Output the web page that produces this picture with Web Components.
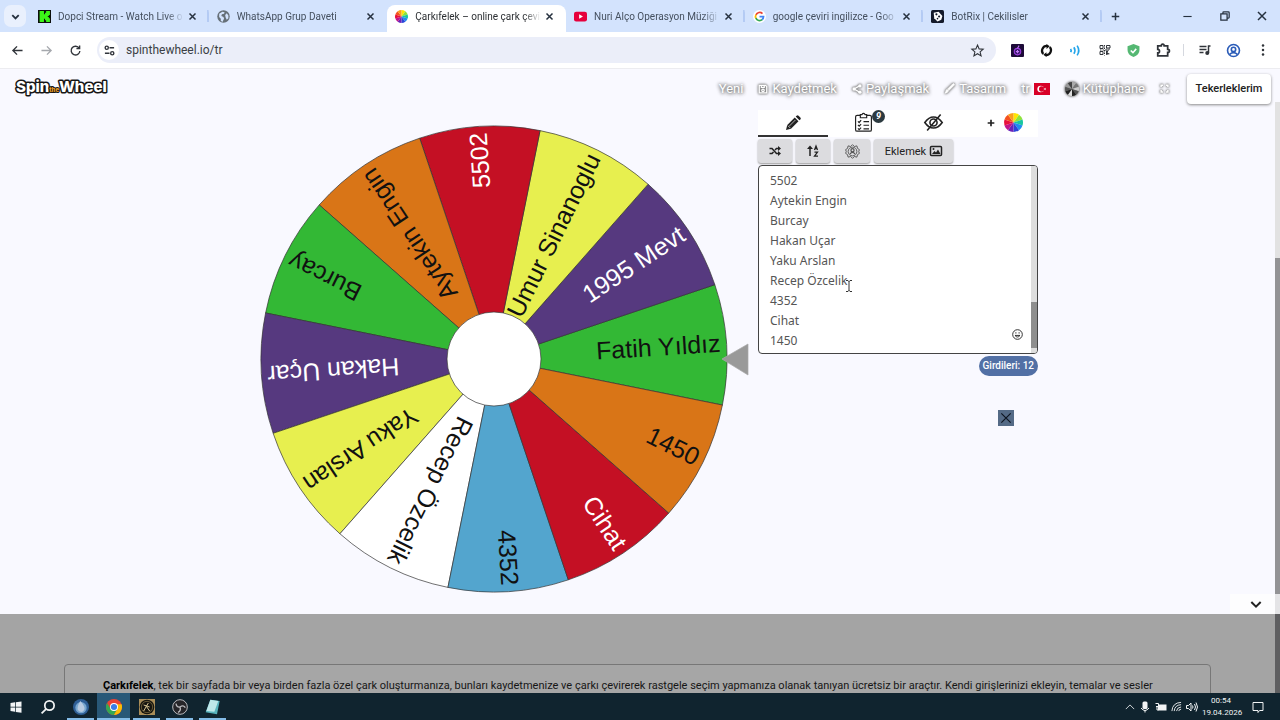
<!DOCTYPE html>
<html lang="tr">
<head>
<meta charset="utf-8">
<title>Çarkıfelek – online çark çevir</title>
<style>
  body {
    margin: 0;
    height: 100vh;
    display: flex;
    flex-direction: column;
    overflow: hidden;
    background: #f9f9ff;
    font-family: Roboto, "Liberation Sans", sans-serif;
    color: #222;
  }
</style>
</head>
<body>
<browser-tabs>
  <browser-tab icon="kick" label="Dopci Stream - Watch Live o"></browser-tab>
  <browser-tab icon="globe" label="WhatsApp Grup Daveti" before-active></browser-tab>
  <browser-tab icon="wheel" label="Çarkıfelek – online çark çevir" active></browser-tab>
  <browser-tab icon="youtube" label="Nuri Alço Operasyon Müziği"></browser-tab>
  <browser-tab icon="google" label="google çeviri ingilizce - Goo"></browser-tab>
  <browser-tab icon="botrix" label="BotRix | Cekilisler"></browser-tab>
</browser-tabs>
<browser-toolbar url="spinthewheel.io/tr"></browser-toolbar>
<spin-page>
  <site-header slot="header"></site-header>
  <spin-wheel slot="wheel"></spin-wheel>
  <entry-panel slot="panel"></entry-panel>
  <about-card slot="about"><b>Çarkıfelek</b>, tek bir sayfada bir veya birden fazla özel çark oluşturmanıza, bunları kaydetmenize ve çarkı çevirerek rastgele seçim yapmanıza olanak tanıyan ücretsiz bir araçtır. Kendi girişlerinizi ekleyin, temalar ve sesler</about-card>
</spin-page>
<task-bar></task-bar>

<script>
const ENTRIES = ['Fatih Yıldız', '1995 Mevt', 'Umur Sinanoglu', '5502', 'Aytekin Engin', 'Burcay',
  'Hakan Uçar', 'Yaku Arslan', 'Recep Özcelik', '4352', 'Cihat', '1450'];

const pie = (colors) => colors.map((c, i) => {
  const a = i * 2 * Math.PI / colors.length - Math.PI / 2;
  const b = (i + 1) * 2 * Math.PI / colors.length - Math.PI / 2;
  return `<path fill="${c}" stroke="none" d="M12 12L${12 + 12 * Math.cos(a)} ${12 + 12 * Math.sin(a)}A12 12 0 0 1 ${12 + 12 * Math.cos(b)} ${12 + 12 * Math.sin(b)}z"/>`;
}).join('');

// all glyphs live in a 24 x 24 box, stroked with the current colour unless they set their own
const ICONS = {
  down: '<path d="M5 9l7 7 7-7"/>',
  up: '<path d="M2 17l10-10 10 10"/>',
  close: '<path d="M4 4l16 16M20 4L4 20"/>',
  plus: '<path d="M12 2v20M2 12h20"/>',
  minimize: '<path d="M1 12h22"/>',
  restore: '<path d="M2 7h15v15H2zM7 7V4q0-2 2-2h11q2 0 2 2v11q0 2-2 2h-3"/>',
  back: '<path d="M23 12H3M11 3l-9 9 9 9"/>',
  forward: '<path d="M1 12h20M13 3l9 9-9 9"/>',
  reload: '<path d="M20 7a9.500 9.500 0 1 0 1.500 6M21 1v7h-7"/>',
  tune: '<circle cx="6" cy="6" r="3.500"/><circle cx="18" cy="18" r="3.500"/><path d="M12 6h10M2 18h10"/>',
  star: '<path d="M12 2l3 7 7.500.600-5.700 5 1.800 7.400L12 18l-6.600 4 1.800-7.400-5.700-5L9 9z"/>',
  kick: '<path fill="#0c0f0c" stroke="none" d="M0 0h24v24H0z"/><path fill="#3cf518" stroke="none" d="M3 2h8v6h2V5h2V2h7v7h-2v2h-2v2h2v2h2v7h-7v-3h-2v-3h-2v6H3z"/>',
  globe: '<circle cx="12" cy="12" r="11.500" fill="#667078" stroke="none"/><path fill="#d3e3fd" stroke="none" d="M4 7l6-4 4 1-1 3-4 1-1 3 4 2 1 3-3 6-3-2v-4l-3-3zM15 9l3-3 3 4v5l-3 3-2-4z"/>',
  wheel: pie(['#ffe600', '#8fe33a', '#19c7a0', '#1e8df0', '#2b45d8', '#6b22b8', '#c0138a', '#e8113c', '#f4511e', '#f9a01b']),
  greywheel: pie(['#aaa', '#777', '#ccc', '#555', '#222', '#ddd', '#222', '#555', '#999', '#444']),
  youtube: '<rect x="0" y="3" width="24" height="18" rx="4" fill="#e6003c" stroke="none"/><path fill="#fff" stroke="none" d="M9.500 8l7 4-7 4z"/>',
  google: '<circle cx="12" cy="12" r="12" fill="#fff" stroke="none"/><g fill="none" stroke-width="3.200"><path stroke="#ea4335" d="M5.500 9A7.500 7.500 0 0 1 17.500 6.500"/><path stroke="#fbbc05" d="M5.500 15.500a7.500 7.500 0 0 1 0-7"/><path stroke="#34a853" d="M17 17.800A7.500 7.500 0 0 1 5.300 15"/><path stroke="#4285f4" d="M12 12.200h7.500a7.500 7.500 0 0 1-2.700 5.700"/></g>',
  botrix: '<rect width="24" height="24" rx="3" fill="#141a2b" stroke="none"/><path fill="#fff" stroke="none" d="M5 5l9-2 7 8-2 7-7 3-6-6z"/><g fill="#141a2b" stroke="none"><circle cx="10" cy="8" r="2"/><circle cx="15" cy="12" r="2"/><circle cx="12" cy="16" r="1.500"/></g>',
  purple: '<rect width="24" height="24" rx="2" fill="#1d0b38" stroke="none"/><circle cx="12" cy="14" r="6" stroke="#9c3de0" fill="#3a146c"/><path stroke="#c07af5" d="M12 8l3-5M9 14h6M12 11v6"/>',
  sync: '<g fill="none" stroke-width="4"><path d="M6 18.500A9 9 0 0 1 13 3.500"/><path d="M18 5.500A9 9 0 0 1 11 20.500"/></g><path fill="currentColor" stroke="none" d="M12 0l6 4-6 5zM12 24l-6-4 6-5z"/>',
  waves: '<path d="M3 9q2 3 0 6M9 6q4 6 0 12M15 3q6 9 0 18"/>',
  qr: '<path d="M2 3h6v6H2zM15 3h7v5h-7zM2 15h6v6H2z"/><path stroke-dasharray="3 2" d="M11 2v21M2 12h20M14 10h8"/><path fill="currentColor" stroke="none" d="M14 13h5l-2 4 5 3-8 2z"/>',
  shield: '<path fill="#55b873" stroke="none" d="M12 0l11 4v7q0 9-11 13Q1 20 1 11V4z"/><path stroke="#fff" d="M7 12l4 4 6-7"/>',
  puzzle: '<path d="M3 5h6q0-3 2.500-3T14 5h6v6q3 0 3 2.500T20 16v6H3v-5q3 0 3-3t-3-3z"/>',
  queue: '<path d="M1 5h14M1 11h14M1 17h8"/><path d="M19 18V4h4"/><circle cx="16.500" cy="18" r="2.500" fill="currentColor"/>',
  person: '<circle cx="12" cy="12" r="11"/><circle cx="12" cy="10" r="4"/><path d="M5 19q7-6 14 0"/>',
  dots: '<g fill="currentColor" stroke="none"><circle cx="12" cy="3" r="2.500"/><circle cx="12" cy="12" r="2.500"/><circle cx="12" cy="21" r="2.500"/></g>',
  save: '<path d="M3 3h15l3 3v15H3zM8 3v5h7V3"/><circle cx="12" cy="15" r="3"/>',
  share: '<path d="M19 4L5 12l14 8"/><g fill="currentColor" stroke="none"><circle cx="19" cy="4.500" r="4"/><circle cx="5" cy="12" r="4"/><circle cx="19" cy="19.500" r="4"/></g>',
  brush: '<path d="M8 13L19 2q2-1 3 0 1 1 0 3L11 16zM7 14l3 3q-2 5-8 5 3-1 2-4 0-3 3-4z" fill="currentColor"/>',
  flag: '<path fill="#d80027" stroke="none" d="M0 3h24v18H0z"/><circle cx="10" cy="12" r="5" fill="#fff" stroke="none"/><circle cx="11.500" cy="12" r="4" fill="#d80027" stroke="none"/><path fill="#fff" stroke="none" d="M14 12l4-2-1 2 1 2z"/>',
  expand: '<path d="M3 8V3h5M16 3h5v5M21 16v5h-5M8 21H3v-5"/>',
  pencil: '<path fill="currentColor" stroke="none" d="M0 24l2-8L14 4l6 6L8 22zM15.500 2.500L17 1q1.500-1.500 3 0l3 3q1.500 1.500 0 3l-1.500 1.500z"/><path stroke="#fff" stroke-width="1" d="M5 18L15 8M3 17l4 4"/>',
  clipboard: '<g stroke-width="1.500"><path d="M8 3H4Q2 3 2 5v16q0 2 2 2h16q2 0 2-2V5q0-2-2-2h-4M8 2h2q2-3 4 0h2v4H8z"/><path d="M12 11h7M12 15.500h7M12 20h7M5 10.500l1.500 1.500L9 9M5 15l1.500 1.500L9 14M5 19.500L6.500 21 9 18.500"/></g>',
  eyeoff: '<path d="M1 12Q6 5 12 5t11 7q-5 7-11 7T1 12zM21 2L4 22"/><circle cx="12" cy="12" r="4.500"/>',
  shuffle: '<path stroke-width="3" d="M1 7h5l9 10h5M1 17h5l3-3M12 10l3-3h5"/><path fill="currentColor" stroke="none" d="M18 2l6 5-6 5zM18 12l6 5-6 5z"/>',
  sort: '<path stroke-width="3" d="M6 22V4"/><path fill="currentColor" stroke="none" d="M0 8l6-7 6 7z"/><path stroke-width="2.500" d="M15 10l3-8 3 8M16 7h4M15 14h6l-6 8h7"/>',
  gear: '<path stroke-width="1.500" d="M12 1l3 3 4-1 1 4 3 2-1 3 1 3-3 2-1 4-4-1-3 3-3-3-4 1-1-4-3-2 1-3-1-3 3-2 1-4 4 1z"/><circle cx="12" cy="12" r="7" stroke-width="1.500"/><circle cx="12" cy="10" r="2.500"/><path d="M8 16q4-5 8 0"/>',
  image: '<rect x="1" y="3" width="22" height="18" rx="2"/><path fill="currentColor" stroke="none" d="M4 18l5-6 3 3 4-6 5 9z"/><circle cx="7" cy="8" r="2" fill="currentColor" stroke="none"/>',
  smile: '<circle cx="12" cy="12" r="10.500"/><path d="M6.500 14q5.500 7 11 0z"/><path d="M8.500 7v3M15.500 7v3"/>',
  windows: '<path fill="currentColor" stroke="none" d="M1 4l9-1.500v9H1zM11.500 2.300L23 1v10.500H11.500zM1 13h9v8.500L1 20zM11.500 13H23v10.500L11.500 22z"/>',
  search: '<circle cx="14.500" cy="9.500" r="8"/><path d="M8.500 15.500L1 23"/>',
  drop: '<circle cx="12" cy="12" r="12" fill="#2f5f96" stroke="none"/><circle cx="12" cy="13" r="8.500" fill="#78a7cf" stroke="none"/><path fill="#b9cbe0" stroke="none" d="M11 3q8 9 6 13-4 7-10 0-1-5 4-13z"/>',
  chrome: '<circle cx="12" cy="12" r="12" fill="#ea4335" stroke="none"/><path fill="#34a853" stroke="none" d="M1.600 6A12 12 0 0 0 12 24l5-9-5-3-5 3z"/><path fill="#fbbc05" stroke="none" d="M12 24l6-11-2-5h7.400A12 12 0 0 1 12 24z"/><circle cx="12" cy="12" r="6" fill="#fff" stroke="none"/><circle cx="12" cy="12" r="4.600" fill="#3b7de8" stroke="none"/>',
  emblem: '<rect width="24" height="24" fill="#a98d58" stroke="none"/><circle cx="12" cy="12" r="11" fill="#17150f" stroke="none"/><circle cx="12" cy="12" r="8.500" stroke="#8e7a4a" stroke-width="1"/><path stroke="#d9c592" stroke-width="1.500" d="M7 18l4-7 5 7M11 11l3-5M7 9l9 3"/>',
  obs: '<circle cx="12" cy="12" r="11" fill="#262529" stroke="#b9b9bd" stroke-width="1.500"/><path stroke="#b9b9bd" d="M12 12q-5 1-6-5M12 12q5-4 8 1M12 12q2 6-3 8"/>',
  notepad: '<path fill="#59b3bd" stroke="none" d="M8 1l14 2-4 20L1 20z"/><path fill="#bfe8ea" stroke="none" d="M8 1l12 2-6 16L2 18z"/>',
  mic: '<rect x="7" y="1" width="10" height="15" rx="3" fill="currentColor" stroke="none"/><path d="M4 14q8 10 16 0M12 18v5"/>',
  battery: '<rect x="7" y="8" width="15" height="10" fill="currentColor"/><path d="M1 5h6v6H2M4 11v7h3"/>',
  wifi: '<path stroke-width="2" d="M2 22Q3 4 22 3M7 22Q8 9 22 8M12 22q1-8 10-9M17 22q0-4 5-4"/>',
  speaker: '<path stroke-width="2" d="M1 9h4l5-5v16l-5-5H1zM13 9q2 3 0 6M17 6q4 6 0 12M20 3q6 9 0 18"/>',
  notice: '<path d="M2 3h20v16h-7l-3 4v-4H2z"/>'
};

class UiIcon extends HTMLElement {
  constructor() {
    super();
    this.attachShadow({ mode: 'open' });
  }
  connectedCallback() {
    const size = this.getAttribute('size') || 12;
    const weight = this.getAttribute('weight') || 2;
    this.shadowRoot.innerHTML = `
    <style>
      :host { display: inline-flex; flex: none; }
      svg { display: block; overflow: visible; }
    </style>
    <svg width="${size}" height="${size}" viewBox="0 0 24 24" fill="none" stroke="currentColor" stroke-width="${weight}" aria-hidden="true">${ICONS[this.getAttribute('name')]}</svg>`;
  }
}
customElements.define('ui-icon', UiIcon);

class BrowserTab extends HTMLElement {
  constructor() {
    super();
    this.attachShadow({ mode: 'open' });
  }
  connectedCallback() {
    this.shadowRoot.innerHTML = `
    <style>
      :host {
        flex: 1;
        min-width: 0;
        height: 27px;
        padding: 0 8px 4px 8px;
        box-sizing: border-box;
        display: flex;
        align-items: center;
        border-radius: 8px 8px 0 0;
        background: linear-gradient(#b4cbf4, #b4cbf4) right 5px / 2px 12px no-repeat;
        color: #45505f;
      }
      :host([before-active]) { background: none; }
      :host([active]) { background: #fff; color: #2c2f33; }
      span {
        flex: 1;
        margin-left: 7px;
        white-space: nowrap;
        overflow: hidden;
        font: 10px/16px Roboto, sans-serif;
        -webkit-mask-image: linear-gradient(90deg, #000 86%, transparent);
        mask-image: linear-gradient(90deg, #000 86%, transparent);
      }
      button { all: unset; display: flex; padding: 4px; color: #26313f; }
    </style>
    <ui-icon name="${this.getAttribute('icon')}" size="13"></ui-icon>
    <span>${this.getAttribute('label')}</span>
    <button aria-label="Kapat"><ui-icon name="close" size="9" weight="4"></ui-icon></button>`;
  }
}
customElements.define('browser-tab', BrowserTab);

class BrowserTabs extends HTMLElement {
  constructor() {
    super();
    this.attachShadow({ mode: 'open' }).innerHTML = `
    <style>
      :host {
        flex: none;
        height: 32px;
        display: flex;
        align-items: center;
        background: #d3e3fd;
        color: #26313f;
      }
      button { all: unset; display: grid; place-items: center; width: 37px; height: 32px; }
      .list { width: 22px; height: 22px; margin: 0 4px; border-radius: 7px; background: #e9f0fd; }
      .tabs { flex: 1; min-width: 0; display: flex; align-self: flex-end; }
      .new { width: 26px; margin-right: 41px; }
    </style>
    <button class="list" aria-label="Sekme ara"><ui-icon name="down" size="11" weight="4"></ui-icon></button>
    <div class="tabs"><slot></slot></div>
    <button class="new" aria-label="Yeni sekme"><ui-icon name="plus" size="9" weight="4"></ui-icon></button>
    <button aria-label="Küçült"><ui-icon name="minimize" size="9" weight="3"></ui-icon></button>
    <button aria-label="Önceki boyut"><ui-icon name="restore" size="10" weight="3"></ui-icon></button>
    <button aria-label="Pencereyi kapat"><ui-icon name="close" size="12" weight="3"></ui-icon></button>`;
  }
}
customElements.define('browser-tabs', BrowserTabs);

class BrowserToolbar extends HTMLElement {
  constructor() {
    super();
    this.attachShadow({ mode: 'open' });
  }
  connectedCallback() {
    const exts = [['purple', 13, 2], ['sync', 13, 2], ['waves', 13, 3], ['qr', 12, 2], ['shield', 13, 3], ['puzzle', 14, 3]];
    this.shadowRoot.innerHTML = `
    <style>
      :host {
        flex: none;
        height: 36px;
        padding: 0 3px;
        display: flex;
        align-items: center;
        background: #fff;
        border-bottom: 1px solid #ececf0;
        color: #30343a;
      }
      button { all: unset; display: grid; place-items: center; width: 29px; height: 26px; }
      .off { color: #a5a8ad; }
      .waves { color: #20a4ea; }
      .sync { color: #111; }
      .person { color: #2b5cb8; }
      .omni {
        flex: 1;
        margin: 0 7px 0 7px;
        height: 26px;
        display: flex;
        align-items: center;
        border-radius: 13px;
        background: #ebeef9;
      }
      .tune { width: 20px; height: 20px; margin: 0 7px 0 2px; border-radius: 50%; background: #fff; }
      input {
        flex: 1;
        padding: 0;
        border: 0;
        outline: 0;
        background: none;
        color: #3a3e44;
        font: 12px/16px Roboto, sans-serif;
      }
      .star { margin-right: 4px; }
      i { width: 1px; height: 12px; margin: 0 6px; background: #d5d8df; }
    </style>
    <button aria-label="Geri"><ui-icon name="back" size="11" weight="3"></ui-icon></button>
    <button class="off" aria-label="İleri"><ui-icon name="forward" size="11" weight="3"></ui-icon></button>
    <button aria-label="Yenile"><ui-icon name="reload" size="11" weight="3"></ui-icon></button>
    <div class="omni">
      <button class="tune" aria-label="Site bilgileri"><ui-icon name="tune" size="11" weight="3"></ui-icon></button>
      <input aria-label="Adres" value="${this.getAttribute('url')}">
      <button class="star" aria-label="Yer işareti"><ui-icon name="star" size="13"></ui-icon></button>
    </div>
    ${exts.map(([n, s, w]) => `<button class="${n}" aria-label="${n}"><ui-icon name="${n}" size="${s}" weight="${w}"></ui-icon></button>`).join('')}
    <i></i>
    <button aria-label="Medya"><ui-icon name="queue" size="12" weight="3"></ui-icon></button>
    <button class="person" aria-label="Profil"><ui-icon name="person" size="13" weight="3"></ui-icon></button>
    <button aria-label="Menü"><ui-icon name="dots" size="12"></ui-icon></button>
    `;
  }
}
customElements.define('browser-toolbar', BrowserToolbar);

class SpinPage extends HTMLElement {
  constructor() {
    super();
    this.attachShadow({ mode: 'open' }).innerHTML = `
    <style>
      :host { flex: 1; min-height: 0; display: flex; overflow: hidden; }
      .page { flex: 1; min-width: 0; display: flex; flex-direction: column; }
      .stage { flex: none; min-height: 504px; display: flex; justify-content: center; gap: 9px; padding-left: 23px; }
      .foot { flex: none; display: flex; justify-content: flex-end; margin-top: -20px; }
      .foot button { all: unset; width: 27px; height: 20px; padding-left: 18px; display: flex; align-items: center; background: #fdfdfe; color: #222; }
      .below { flex: 1; background: #a4a4a4; padding: 50px 64px 0; }
      .bar { flex: none; width: 5px; display: flex; flex-direction: column; }
      .track { height: 156px; margin-top: 33px; background: #e2e2e2; }
      .thumb { height: 336px; background: #939395; }
      .rest { height: 20px; background: #e4e4e6; }
      .dim { flex: 1; background: #5f5f61; }
    </style>
    <div class="page">
      <slot name="header"></slot>
      <main class="stage"><slot name="wheel"></slot><slot name="panel"></slot></main>
      <div class="foot"><button aria-label="Aşağı"><ui-icon name="down" size="16" weight="3"></ui-icon></button></div>
      <section class="below"><slot name="about"></slot></section>
    </div>
    <div class="bar"><div class="track"></div><div class="thumb"></div><div class="rest"></div><div class="dim"></div></div>`;
  }
}
customElements.define('spin-page', SpinPage);

class SiteHeader extends HTMLElement {
  constructor() {
    super();
    this.attachShadow({ mode: 'open' }).innerHTML = `
    <style>
      :host { flex: none; height: 41px; padding: 0 4px 0 14px; display: flex; align-items: center; }
      .logo { margin-right: auto; display: flex; padding-bottom: 8px; }
      .logo text { font: 800 15px Inter, Roboto, sans-serif; fill: #fff; stroke: #161616; stroke-width: 3px; paint-order: stroke; stroke-linejoin: round; }
      .logo .the { font-size: 6px; fill: #f2a324; stroke-width: 2px; }
      nav { display: flex; align-items: center; gap: 15px; margin-right: 18px; padding-bottom: 2px; }
      nav a {
        display: flex;
        align-items: center;
        gap: 4px;
        color: #fff;
        text-decoration: none;
        font-size: 13px;
        line-height: 20px;
        text-shadow: 0 0 3px #777, 0 0 4px #888, 0 1px 4px #999;
      }
      nav ui-icon { filter: drop-shadow(0 0 1px #777) drop-shadow(0 0 1px #888); }
      nav .flag { filter: none; }
      .mine {
        border: 0;
        border-radius: 4px;
        width: 84px;
        height: 30px;
        padding: 0;
        margin-bottom: 2px;
        background: #fff;
        color: #222;
        font: 500 11px/16px Roboto, sans-serif;
        box-shadow: 0 1px 3px #888;
      }
    </style>
    <a class="logo" href="#" aria-label="Spin the Wheel"><svg width="110" height="22"><text x="2" y="17">Spin<tspan class="the">the</tspan>Wheel</text></svg></a>
    <nav>
      <a href="#">Yeni</a>
      <a href="#"><ui-icon name="save" size="10" weight="3"></ui-icon>Kaydetmek</a>
      <a href="#"><ui-icon name="share" size="10" weight="3"></ui-icon>Paylaşmak</a>
      <a href="#"><ui-icon name="brush" size="11"></ui-icon>Tasarım</a>
      <a href="#">tr<ui-icon class="flag" name="flag" size="16"></ui-icon></a>
      <a href="#"><ui-icon name="greywheel" size="14"></ui-icon>Kütüphane</a>
      <a href="#" aria-label="Tam ekran"><ui-icon name="expand" size="9" weight="4"></ui-icon></a>
    </nav>
    <button class="mine">Tekerleklerim</button>`;
  }
}
customElements.define('site-header', SiteHeader);

class SpinWheel extends HTMLElement {
  constructor() {
    super();
    this.attachShadow({ mode: 'open' });
  }
  connectedCallback() {
    const fills = ['#33b835', '#56397f', '#e7ef4f', '#c41024', '#d97517', '#33b835', '#56397f', '#e7ef4f', '#fff', '#53a5ce', '#c41024', '#d97517'];
    const light = ['#56397f', '#c41024'];
    const rim = 233, step = 360 / ENTRIES.length;
    const at = (deg) => {
      const a = deg * Math.PI / 180;
      return `${rim * Math.cos(a)} ${rim * Math.sin(a)}`;
    };
    const slices = ENTRIES.map((name, i) => {
      const mid = -3.6 - i * step;
      return `<path fill="${fills[i]}" d="M0 0L${at(mid - step / 2)}A${rim} ${rim} 0 0 1 ${at(mid + step / 2)}z"/>
        <text x="227" y="7" transform="rotate(${mid})" fill="${light.includes(fills[i]) ? '#fff' : '#111'}">${name}</text>`;
    });
    this.shadowRoot.innerHTML = `
    <style>
      :host { display: block; flex: none; padding-top: 14px; }
      svg { display: block; }
      path, circle { stroke: #333; stroke-opacity: .7; stroke-width: 1; }
      text { font: 25px "Liberation Sans", Arial, sans-serif; text-anchor: end; }
    </style>
    <svg width="489" height="470" viewBox="-234 -235 489 470" role="img" aria-label="Çark">
      ${slices.join('')}
      <circle r="47" fill="#fff"/>
      <path d="M228 0l26-15v31z" fill="#999" style="stroke:#aaa"/>
    </svg>`;
  }
}
customElements.define('spin-wheel', SpinWheel);

class EntryPanel extends HTMLElement {
  constructor() {
    super();
    this.attachShadow({ mode: 'open' });
  }
  connectedCallback() {
    this.shadowRoot.innerHTML = `
    <style>
      :host { flex: none; width: 280px; display: flex; flex-direction: column; color: #222; }
      button { font-family: inherit; color: inherit; padding: 0; border: 0; }
      .tabs { display: grid; grid-template-columns: repeat(4, 1fr); background: #fff; }
      .tabs button { height: 27px; display: flex; align-items: center; justify-content: center; gap: 9px; background: none; border-bottom: 2px solid transparent; box-sizing: border-box; }
      .tabs .on { border-color: #333; }
      .tabs .more { padding-left: 4px; }
      .count { position: relative; }
      .count b {
        position: absolute;
        left: 44px;
        top: 0;
        width: 13px;
        height: 13px;
        border-radius: 50%;
        background: #2c3a40;
        color: #fff;
        font: italic 700 9px/13px Roboto, sans-serif;
      }
      .tools { display: flex; gap: 4px; padding: 2px 0; }
      .tools button {
        width: 34px;
        height: 24px;
        display: flex;
        align-items: center;
        justify-content: center;
        gap: 4px;
        border-radius: 3px;
        background: #dcdcdf;
        box-shadow: 0 1px 2px #999;
      }
      .tools .gear { width: 36px; color: #555; }
      .tools .add { width: 79px; font-size: 11px; }
      .box {
        position: relative;
        display: flex;
        height: 187px;
        border: 1px solid #444;
        border-radius: 4px;
        background: #fff;
        overflow: hidden;
      }
      textarea {
        flex: 1;
        min-width: 0;
        margin: 5px 0 0;
        border: 0;
        outline: 0;
        padding: 0 0 2px 11px;
        resize: none;
        scrollbar-width: none;
        background: none;
        color: #555;
        font: 12px/20px "Noto Sans", "Open Sans", sans-serif;
      }
      .bar { flex: none; width: 6px; background: #dedede; display: flex; align-items: flex-end; }
      .bar div { width: 6px; height: 46px; margin-bottom: 5px; background: #8e8e8e; }
      .smile { position: absolute; right: 14px; bottom: 13px; background: none; display: flex; }
      .caret { position: absolute; left: 86px; top: 114px; }
      .badge {
        align-self: flex-end;
        margin-top: 2px;
        padding: 0 4px;
        border-radius: 10px;
        background: #5270a5;
        color: #fff;
        font: 500 10px/20px Roboto, sans-serif;
      }
      .shut { align-self: flex-end; margin: 34px 24px 0 0; width: 16px; height: 16px; display: grid; place-items: center; background: #546a86; color: #0d1420; }
    </style>
    <div class="tabs">
      <button class="on" aria-label="Düzenle"><ui-icon name="pencil" size="15"></ui-icon></button>
      <button class="count" aria-label="Sonuçlar"><ui-icon name="clipboard" size="19"></ui-icon><b>9</b></button>
      <button aria-label="Gizle"><ui-icon name="eyeoff" size="19"></ui-icon></button>
      <button class="more" aria-label="Çark ekle"><ui-icon name="plus" size="8" weight="5"></ui-icon><ui-icon name="wheel" size="19"></ui-icon></button>
    </div>
    <div class="tools">
      <button aria-label="Karıştır"><ui-icon name="shuffle" size="12"></ui-icon></button>
      <button aria-label="Sırala"><ui-icon name="sort" size="12"></ui-icon></button>
      <button class="gear" aria-label="Ayarlar"><ui-icon name="gear" size="15"></ui-icon></button>
      <button class="add">Eklemek <ui-icon name="image" size="12" weight="3"></ui-icon></button>
    </div>
    <div class="box">
      <textarea aria-label="Girdiler" spellcheck="false">${ENTRIES.join('\n')}</textarea>
      <div class="bar"><div></div></div>
      <button class="smile" aria-label="Emoji"><ui-icon name="smile" size="11"></ui-icon></button>
      <svg class="caret" width="8" height="12" fill="none" stroke="#333"><path d="M1 .5h2l1 1 1-1h2M4 1v10M1 11.500h2l1-1 1 1h2"/></svg>
    </div>
    <div class="badge">Girdileri: ${ENTRIES.length}</div>
    <button class="shut" aria-label="Kapat"><ui-icon name="close" size="14"></ui-icon></button>`;
    const area = this.shadowRoot.querySelector('textarea');
    area.scrollTop = area.scrollHeight;
  }
}
customElements.define('entry-panel', EntryPanel);

class AboutCard extends HTMLElement {
  constructor() {
    super();
    this.attachShadow({ mode: 'open' }).innerHTML = `
    <style>
      :host {
        display: block;
        padding: 12px 0 20px 38px;
        border: 1px solid #777;
        border-radius: 4px;
        background: #a6a6a6;
        color: #161616;
        font-size: 11px;
        line-height: 18px;
        white-space: nowrap;
      }
      ::slotted(b) { color: #000; }
    </style>
    <slot></slot>`;
  }
}
customElements.define('about-card', AboutCard);

class TaskBar extends HTMLElement {
  constructor() {
    super();
    const apps = ['drop', 'chrome', 'emblem', 'obs', 'notepad'];
    this.attachShadow({ mode: 'open' }).innerHTML = `
    <style>
      :host { flex: none; height: 27px; display: flex; align-items: center; background: #10242f; color: #f2f4f5; }
      button { all: unset; display: grid; place-items: center; width: 32px; height: 27px; box-sizing: border-box; }
      .app { width: 33px; background: linear-gradient(#84bce8, #84bce8) center bottom / 27px 2px no-repeat; }
      .chrome { background: linear-gradient(#84bce8, #84bce8) center bottom / 33px 2px no-repeat #285878; }
      .tray { margin-left: auto; display: flex; align-items: center; gap: 4px; }
      .clock { width: 38px; font: 8px/12px Roboto, sans-serif; text-align: center; white-space: nowrap; }
      .clock span { display: block; }
      .note { width: 40px; padding-right: 4px; }
    </style>
    <button aria-label="Başlat"><ui-icon name="windows" size="12"></ui-icon></button>
    <button aria-label="Ara"><ui-icon name="search" size="14" weight="3"></ui-icon></button>
    ${apps.map((n) => `<button class="app ${n}" aria-label="${n}"><ui-icon name="${n}" size="16"></ui-icon></button>`).join('')}
    <div class="tray">
      <ui-icon name="up" size="10"></ui-icon>
      <ui-icon name="mic" size="12"></ui-icon>
      <ui-icon name="battery" size="12"></ui-icon>
      <ui-icon name="wifi" size="11"></ui-icon>
      <ui-icon name="speaker" size="12"></ui-icon>
      <div class="clock"><span>00:54</span><span>19.04.2026</span></div>
    </div>
    <button class="note" aria-label="Bildirimler"><ui-icon name="notice" size="12"></ui-icon></button>`;
  }
}
customElements.define('task-bar', TaskBar);
</script>
</body>
</html>
